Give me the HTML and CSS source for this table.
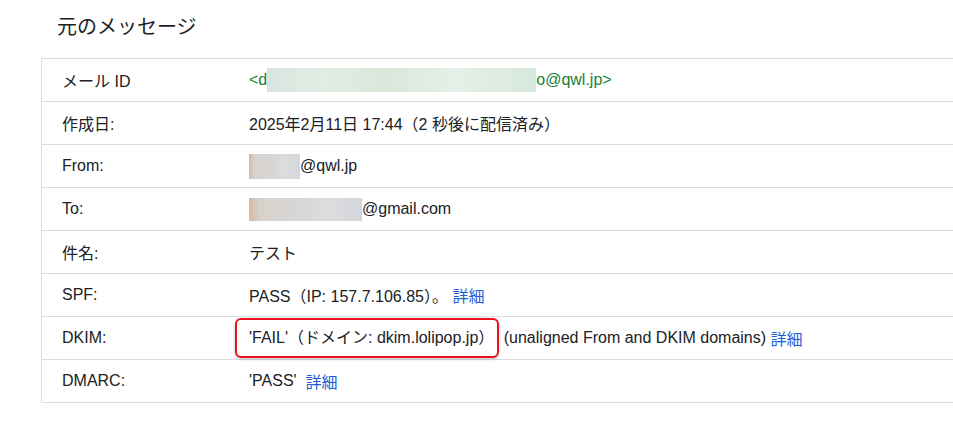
FILE: index.html
```html
<!DOCTYPE html>
<html lang="ja">
<head>
<meta charset="utf-8">
<link rel="stylesheet" href="styles.css">
</head>
<body>
<div class="page">
  <h1 class="title">元のメッセージ</h1>
  <div class="table">
    <div class="row">
      <div class="label">メール ID</div>
      <div class="value green">&lt;d<span class="blur blur-green"></span>o@qwl.jp&gt;</div>
    </div>
    <div class="row">
      <div class="label">作成日:</div>
      <div class="value">2025年2月11日 17:44（2 秒後に配信済み）</div>
    </div>
    <div class="row">
      <div class="label">From:</div>
      <div class="value"><span class="blur blur-gray from"></span>@qwl.jp</div>
    </div>
    <div class="row">
      <div class="label">To:</div>
      <div class="value"><span class="blur blur-gray to"></span>@gmail.com</div>
    </div>
    <div class="row">
      <div class="label">件名:</div>
      <div class="value">テスト</div>
    </div>
    <div class="row">
      <div class="label">SPF:</div>
      <div class="value">PASS（IP: 157.7.106.85）。 <a class="link" href="#">詳細</a></div>
    </div>
    <div class="row">
      <div class="label">DKIM:</div>
      <div class="value"><span class="highlight">'FAIL'（ドメイン: dkim.lolipop.jp）</span> (unaligned From and DKIM domains) <a class="link" href="#">詳細</a></div>
    </div>
    <div class="row">
      <div class="label">DMARC:</div>
      <div class="value">'PASS' &nbsp;<a class="link" href="#">詳細</a></div>
    </div>
  </div>
</div>
</body>
</html>
```
FILE: styles.css
```css
html, body {
  margin: 0;
  padding: 0;
  background: #fff;
  overflow: hidden;
}
body {
  font-family: "Liberation Sans", Arial, "Noto Sans CJK JP", sans-serif;
  color: #202124;
  font-size: 16px;
}
.page {
  padding: 0 0 0 41px;
}
.title {
  margin: 0;
  height: 58px;
  box-sizing: border-box;
  padding: 12px 0 0 16px;
  font-family: "Noto Sans CJK JP", sans-serif;
  font-weight: 400;
  font-size: 20px;
  line-height: 28px;
  color: #202124;
}
.table {
  border-left: 1px solid #dadce0;
  border-top: 1px solid #dadce0;
}
.row {
  display: flex;
  align-items: center;
  height: 43px;
  box-sizing: border-box;
  border-bottom: 1px solid #dadce0;
}
.label {
  width: 186px;
  padding-left: 20px;
  box-sizing: border-box;
  flex: none;
}
.value {
  display: flex;
  align-items: center;
  white-space: pre;
  padding-left: 21px;
}
.green {
  color: #188038;
}
.link {
  color: #1a5fd6;
  text-decoration: none;
}
.blur {
  display: inline-block;
  height: 25px;
}
.blur-green {
  width: 269px;
  height: 24px;
  background: linear-gradient(90deg, #d6e6df 0%, #e2ece3 20%, #dae7db 45%, #e6efe7 70%, #d7e8dc 100%);
}
.blur-gray {
  background: linear-gradient(90deg, #d4b9a4 0%, #d8d2cd 10%, #d6d6d6 40%, #dcdcdc 70%, #d3d6dc 100%);
}
.from {
  width: 51px;
  height: 25px;
}
.to {
  width: 113px;
  height: 23px;
}
.highlight {
  display: inline-block;
  border: 2px solid #e8131c;
  border-radius: 6px;
  padding: 9px 3px 9px 12px;
  margin: 0 0 0 -14px;
  box-shadow: 0 1px 3px rgba(0,0,0,0.25);
  line-height: 18px;
}
```
